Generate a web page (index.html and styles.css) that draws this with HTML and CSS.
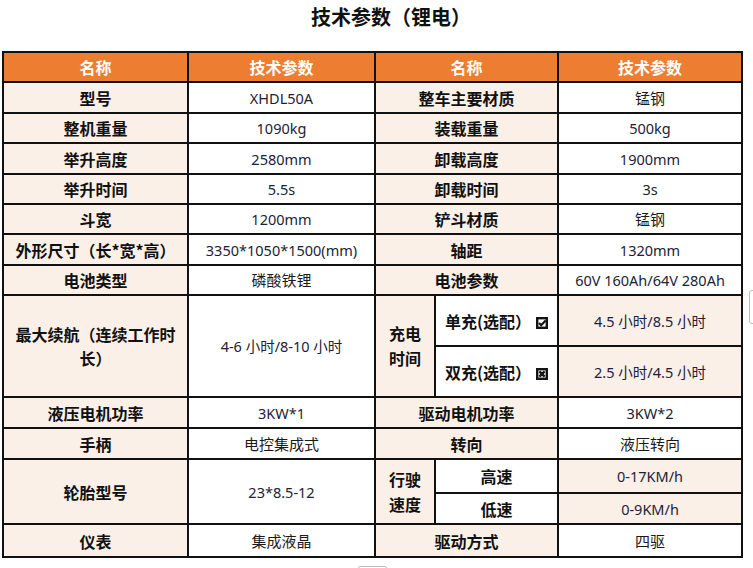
FILE: index.html
```html
<!DOCTYPE html>
<html lang="zh-CN">
<head>
<meta charset="utf-8">
<title>技术参数（锂电）</title>
<link rel="stylesheet" href="styles.css">
</head>
<body>
<div class="page">
  <h1 class="title">技术参数（锂电）</h1>
  <table class="spec">
    <colgroup>
      <col class="c1"><col class="c2"><col class="c3"><col class="c4"><col class="c5">
    </colgroup>
    <tr class="head h30">
      <th>名称</th><th>技术参数</th><th colspan="2">名称</th><th>技术参数</th>
    </tr>
    <tr class="h31">
      <td class="nm">型号</td><td class="val num">XHDL50A</td>
      <td class="nm" colspan="2">整车主要材质</td><td class="val">锰钢</td>
    </tr>
    <tr class="h30">
      <td class="nm">整机重量</td><td class="val num">1090kg</td>
      <td class="nm" colspan="2">装载重量</td><td class="val num">500kg</td>
    </tr>
    <tr class="h31">
      <td class="nm">举升高度</td><td class="val num">2580mm</td>
      <td class="nm" colspan="2">卸载高度</td><td class="val num">1900mm</td>
    </tr>
    <tr class="h30">
      <td class="nm">举升时间</td><td class="val num">5.5s</td>
      <td class="nm" colspan="2">卸载时间</td><td class="val num">3s</td>
    </tr>
    <tr class="h30">
      <td class="nm">斗宽</td><td class="val num">1200mm</td>
      <td class="nm" colspan="2">铲斗材质</td><td class="val">锰钢</td>
    </tr>
    <tr class="h31">
      <td class="nm">外形尺寸（长*宽*高）</td><td class="val num">3350*1050*1500(mm)</td>
      <td class="nm" colspan="2">轴距</td><td class="val num">1320mm</td>
    </tr>
    <tr class="h30">
      <td class="nm">电池类型</td><td class="val">磷酸铁锂</td>
      <td class="nm" colspan="2">电池参数</td><td class="val num">60V 160Ah/64V 280Ah</td>
    </tr>
    <tr class="h51">
      <td class="nm wrap" rowspan="2">最大续航（连续工作时<br>长）</td>
      <td class="val num" rowspan="2">4-6 小时/8-10 小时</td>
      <td class="nm sub" rowspan="2">充电<br>时间</td>
      <td class="nm white opt">单充(选配）<svg class="box" viewBox="0 0 12 12" width="12" height="12"><rect x="1.2" y="1.2" width="9.6" height="9.6" fill="none" stroke="#141414" stroke-width="2.4"/><path d="M3 6 L5.2 8.2 L9.6 3.6" fill="none" stroke="#141414" stroke-width="2.2"/></svg></td>
      <td class="val num peach">4.5 小时/8.5 小时</td>
    </tr>
    <tr class="h51">
      <td class="nm white opt">双充(选配）<svg class="box" viewBox="0 0 12 12" width="12" height="12"><rect x="1.2" y="1.2" width="9.6" height="9.6" fill="none" stroke="#141414" stroke-width="2.4"/><path d="M3.4 3.4 L8.6 8.6 M8.6 3.4 L3.4 8.6" stroke="#141414" stroke-width="2.4"/></svg></td>
      <td class="val num peach">2.5 小时/4.5 小时</td>
    </tr>
    <tr class="h31">
      <td class="nm">液压电机功率</td><td class="val num">3KW*1</td>
      <td class="nm" colspan="2">驱动电机功率</td><td class="val num">3KW*2</td>
    </tr>
    <tr class="h31">
      <td class="nm">手柄</td><td class="val">电控集成式</td>
      <td class="nm" colspan="2">转向</td><td class="val">液压转向</td>
    </tr>
    <tr class="h34">
      <td class="nm" rowspan="2">轮胎型号</td>
      <td class="val num" rowspan="2">23*8.5-12</td>
      <td class="nm sub" rowspan="2">行驶<br>速度</td>
      <td class="nm white">高速</td>
      <td class="val num peach">0-17KM/h</td>
    </tr>
    <tr class="h31">
      <td class="nm white">低速</td>
      <td class="val num peach">0-9KM/h</td>
    </tr>
    <tr class="h33">
      <td class="nm">仪表</td><td class="val">集成液晶</td>
      <td class="nm" colspan="2">驱动方式</td><td class="val">四驱</td>
    </tr>
  </table>
  <div class="frag frag-side"></div>
  <div class="frag frag-bottom"></div>
</div>
</body>
</html>
```
FILE: styles.css
```css
html, body {
  margin: 0;
  padding: 0;
  background: #ffffff;
}
body {
  font-family: "Noto Sans CJK SC", "Noto Sans", sans-serif;
  color: #111;
}
.page {
  position: relative;
  width: 753px;
  height: 568px;
  overflow: hidden;
}
.title {
  margin: 0;
  height: 51px;
  padding: 3px 0 0 311px;
  box-sizing: border-box;
  font-size: 20px;
  line-height: 28px;
  font-weight: 700;
  color: #111;
}
.spec {
  margin-left: 2px;
  border-collapse: collapse;
  table-layout: fixed;
  width: 741px;
}
.c1 { width: 185px; }
.c2 { width: 187px; }
.c3 { width: 60px; }
.c4 { width: 123px; }
.c5 { width: 184px; }
.spec th, .spec td {
  border: 2px solid #111;
  padding: 0 4px;
  text-align: center;
  vertical-align: middle;
  white-space: nowrap;
}
.spec th {
  background: #ed7d31;
  color: #fff;
  font-weight: 700;
  font-size: 16px;
  line-height: 20px;
}
.nm {
  background: #fbf0e8;
  font-weight: 700;
  font-size: 16px;
  line-height: 20px;
  color: #111;
}
.nm.white { background: #ffffff; }
.nm.wrap { line-height: 24px; white-space: normal; }
.nm.sub { line-height: 25px; }
.val {
  background: #ffffff;
  font-size: 15px;
  line-height: 20px;
  color: #1a1a1a;
}
.val.peach { background: #fbf0e8; }
.num {
  font-family: "Noto Sans", "Noto Sans CJK SC", sans-serif;
  font-size: 14.5px;
  color: #1b2236;
}
.opt { padding-left: 8px; padding-right: 4px; }
.box {
  display: inline-block;
  vertical-align: -1px;
  margin-left: 5px;
}
.h30 { height: 30px; }
.h31 { height: 31px; }
.h33 { height: 33px; }
.h34 { height: 34px; }
.h51 { height: 51px; }
.frag {
  position: absolute;
  border: 1px solid #bdbdbd;
}
.frag-side {
  left: 749px;
  top: 290px;
  width: 8px;
  height: 32px;
  border-radius: 3px;
}
.frag-bottom {
  left: 358px;
  top: 566px;
  width: 27px;
  height: 6px;
  border-radius: 2px;
}
```
